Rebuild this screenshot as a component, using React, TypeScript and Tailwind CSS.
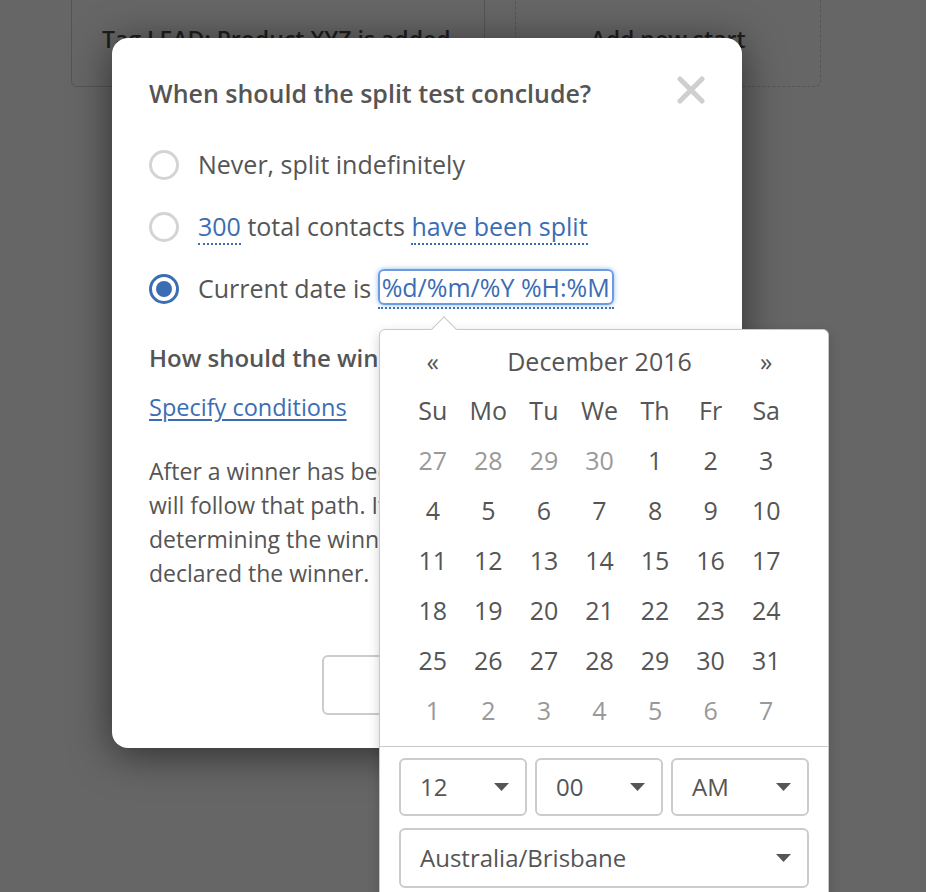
import { useState } from 'react';

const weekDays = ['Su', 'Mo', 'Tu', 'We', 'Th', 'Fr', 'Sa'];

type Day = { n: number; muted?: boolean };

const weeks: Day[][] = [
  [{ n: 27, muted: true }, { n: 28, muted: true }, { n: 29, muted: true }, { n: 30, muted: true }, { n: 1 }, { n: 2 }, { n: 3 }],
  [4, 5, 6, 7, 8, 9, 10].map((n) => ({ n })),
  [11, 12, 13, 14, 15, 16, 17].map((n) => ({ n })),
  [18, 19, 20, 21, 22, 23, 24].map((n) => ({ n })),
  [25, 26, 27, 28, 29, 30, 31].map((n) => ({ n })),
  [1, 2, 3, 4, 5, 6, 7].map((n) => ({ n, muted: true })),
];

function Caret() {
  return (
    <svg width="15" height="8" viewBox="0 0 15 8" className="shrink-0">
      <path d="M0 0 L15 0 L7.5 8 Z" fill="#555" />
    </svg>
  );
}

function SelectBox({ value, className }: { value: string; className?: string }) {
  return (
    <div
      className={
        'flex items-center justify-between rounded-md border-2 border-[#ccc] bg-white pl-[19px] pr-[16px] text-[24px] text-[#555] ' +
        (className ?? '')
      }
    >
      <span>{value}</span>
      <Caret />
    </div>
  );
}

function Radio({ checked }: { checked?: boolean }) {
  if (checked) {
    return (
      <span className="flex h-[30px] w-[30px] shrink-0 items-center justify-center rounded-full border-[3px] border-[#3b6db4] bg-white">
        <span className="h-[16px] w-[16px] rounded-full bg-[#3b6db4]" />
      </span>
    );
  }
  return <span className="h-[30px] w-[30px] shrink-0 rounded-full border-[3px] border-[#d4d4d4] bg-white" />;
}

function DatePicker() {
  return (
    <div className="absolute left-[379px] top-[329px] w-[450px] rounded-md border-[1.5px] border-[#c8c8c8] bg-white shadow-[0_4px_12px_rgba(0,0,0,0.18)]">
      {/* pointer */}
      <div className="absolute left-[55px] top-[-10px] h-[18px] w-[18px] rotate-45 border-l-[1.5px] border-t-[1.5px] border-[#c8c8c8] bg-white" />

      <div className="pl-[25px] pt-[8px] pb-[10px] text-[25px] text-[#555]">
        <div className="grid h-[48px] w-[389px] grid-cols-7 items-center text-center">
          <span>«</span>
          <span className="col-span-5">December 2016</span>
          <span>»</span>
        </div>
        <div className="grid h-[50px] w-[389px] grid-cols-7 items-center text-center">
          {weekDays.map((d) => (
            <span key={d}>{d}</span>
          ))}
        </div>
        {weeks.map((w, i) => (
          <div key={i} className="grid h-[50px] w-[389px] grid-cols-7 items-center text-center">
            {w.map((d, j) => (
              <span key={j} className={d.muted ? 'text-[#999]' : 'text-[#555]'}>
                {d.n}
              </span>
            ))}
          </div>
        ))}
      </div>

      <div className="border-t-[1.5px] border-[#c8c8c8] px-[19px] pt-[11px] pb-[20px]">
        <div className="flex gap-[8px]">
          <SelectBox value="12" className="h-[58px] w-[128px]" />
          <SelectBox value="00" className="h-[58px] w-[128px]" />
          <SelectBox value="AM" className="h-[58px] w-[138px]" />
        </div>
        <SelectBox value="Australia/Brisbane" className="mt-[12px] h-[60px] w-[410px]" />
      </div>
    </div>
  );
}

export default function App() {
  const [choice] = useState(2);

  return (
    <div
      className="relative h-[892px] w-[926px] overflow-hidden bg-[#666]"
      style={{ fontFamily: '"Open Sans", "Noto Sans", sans-serif' }}
    >
      {/* page behind the overlay */}
      <div className="flex gap-[30px] pl-[71px]">
        <div className="-mt-[8px] flex h-[95px] w-[414px] items-center rounded-md border-[1.5px] border-[#555] pl-[30px] text-[23px] font-semibold text-[#1e1e1e]">
          Tag LEAD: Product XYZ is added
        </div>
        <div className="-mt-[8px] flex h-[95px] w-[306px] items-center justify-center rounded-md border-[1.5px] border-dashed border-[#555] text-[23px] font-semibold text-[#1e1e1e]">
          Add new start
        </div>
      </div>

      {/* modal */}
      <div className="absolute left-[112px] top-[38px] h-[710px] w-[630px] rounded-2xl bg-white px-[37px] pt-[40px] shadow-[0_6px_40px_rgba(0,0,0,0.55)]">
        <div className="flex items-center justify-between">
          <h2 className="text-[25px] font-semibold leading-[30px] text-[#555]">When should the split test conclude?</h2>
          <svg width="28" height="28" viewBox="0 0 28 28" className="-mt-[6px]">
            <path d="M3 3 L25 25 M25 3 L3 25" stroke="#cfcfcf" strokeWidth="5" strokeLinecap="round" />
          </svg>
        </div>

        <div className="mt-[37px] flex flex-col gap-[22px] text-[25px] text-[#555]">
          <div className="flex h-[40px] items-center gap-[19px]">
            <Radio checked={choice === 0} />
            <span>Never, split indefinitely</span>
          </div>
          <div className="flex h-[40px] items-center gap-[19px]">
            <Radio checked={choice === 1} />
            <span>
              <span className="border-b-2 border-dotted border-[#3b6db4] text-[#3b6db4]">300</span> total contacts{' '}
              <span className="border-b-2 border-dotted border-[#3b6db4] text-[#3b6db4]">have been split</span>
            </span>
          </div>
          <div className="flex h-[40px] items-center gap-[19px]">
            <Radio checked={choice === 2} />
            <span className="flex items-center">
              <span>Current date is&nbsp;</span>
              <span className="border-b-2 border-dotted border-[#3b6db4] pb-[2px]">
                <span className="block rounded-md border-2 border-[#6b9be0] px-[2px] leading-[32px] text-[#3b6db4] shadow-[0_0_5px_rgba(80,140,230,0.6)]">
                  %d/%m/%Y %H:%M
                </span>
              </span>
            </span>
          </div>
        </div>

        <h3 className="mt-[34px] text-[24px] font-semibold leading-[30px] text-[#555]">
          How should the winner be determined?
        </h3>
        <a className="mt-[19px] block text-[23.5px] leading-[30px] text-[#3b6db4] underline underline-offset-[3px]">
          Specify conditions
        </a>

        <p className="mt-[32px] text-[23px] leading-[34px] text-[#555]">
          After a winner has been declared, all contacts
          <br />
          will follow that path. If there is a tie when
          <br />
          determining the winner, the first path will be
          <br />
          declared the winner.
        </p>

        <div className="mt-[65px] flex justify-end gap-[12px] pl-[173px]">
          <button className="h-[60px] flex-1 rounded-md border-2 border-[#ccc] bg-white text-[22px] text-[#555]">
            Cancel
          </button>
          <button className="h-[60px] flex-1 rounded-md bg-[#3b6db4] text-[22px] font-semibold text-white">
            Save
          </button>
        </div>
      </div>

      <DatePicker />
    </div>
  );
}
